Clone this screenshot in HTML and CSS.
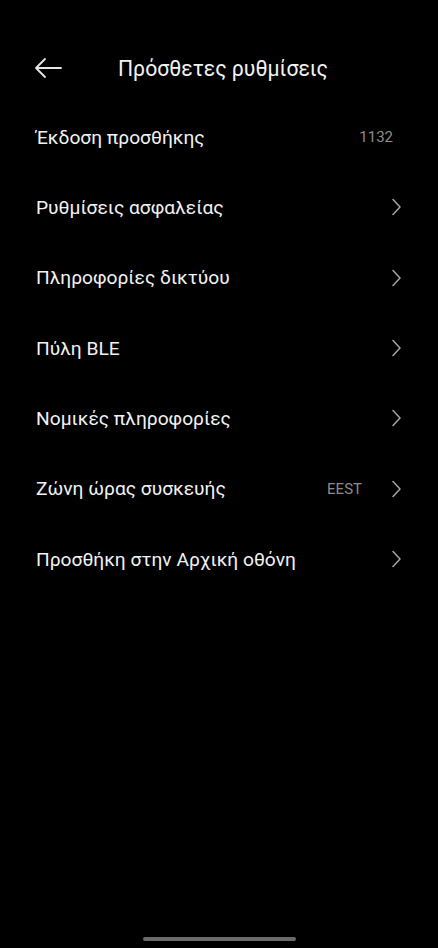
FILE: index.html
```html
<!DOCTYPE html>
<html lang="el">
<head>
  <meta charset="UTF-8">
  <meta name="viewport" content="width=device-width, initial-scale=1.0">
  <title>Πρόσθετες ρυθμίσεις</title>
  <link rel="stylesheet" href="styles.css">
</head>
<body>
  <header class="top-bar">
    <button class="back" aria-label="Πίσω">
      <svg width="28" height="22" viewBox="0 0 28 22" fill="none" stroke="#e6e6e6" stroke-width="1.8" stroke-linecap="round" stroke-linejoin="round">
        <path d="M27 11H2M11 2L2 11l9 9"/>
      </svg>
    </button>
    <h1>Πρόσθετες ρυθμίσεις</h1>
  </header>

  <ul class="settings">
    <li class="row">
      <span class="label">Έκδοση προσθήκης</span>
      <span class="value only">1132</span>
    </li>
    <li class="row">
      <span class="label">Ρυθμίσεις ασφαλείας</span>
      <svg class="chevron" width="10" height="18" viewBox="0 0 10 18"><path d="M2 1.5l7 7.5-7 7.5"/></svg>
    </li>
    <li class="row">
      <span class="label">Πληροφορίες δικτύου</span>
      <svg class="chevron" width="10" height="18" viewBox="0 0 10 18"><path d="M2 1.5l7 7.5-7 7.5"/></svg>
    </li>
    <li class="row">
      <span class="label">Πύλη BLE</span>
      <svg class="chevron" width="10" height="18" viewBox="0 0 10 18"><path d="M2 1.5l7 7.5-7 7.5"/></svg>
    </li>
    <li class="row">
      <span class="label">Νομικές πληροφορίες</span>
      <svg class="chevron" width="10" height="18" viewBox="0 0 10 18"><path d="M2 1.5l7 7.5-7 7.5"/></svg>
    </li>
    <li class="row">
      <span class="label">Ζώνη ώρας συσκευής</span>
      <span class="value">EEST</span>
      <svg class="chevron" width="10" height="18" viewBox="0 0 10 18"><path d="M2 1.5l7 7.5-7 7.5"/></svg>
    </li>
    <li class="row">
      <span class="label">Προσθήκη στην Αρχική οθόνη</span>
      <svg class="chevron" width="10" height="18" viewBox="0 0 10 18"><path d="M2 1.5l7 7.5-7 7.5"/></svg>
    </li>
  </ul>

  <div class="home-indicator"></div>
</body>
</html>
```

FILE: styles.css
```css
html, body {
  margin: 0;
  height: 100%;
  background: #000;
}
body {
  font-family: Roboto, "Noto Sans", sans-serif;
  color: #f2f2f2;
  display: flex;
  flex-direction: column;
}
.top-bar {
  display: flex;
  align-items: center;
  height: 56px;
  margin-top: 40px;
  padding: 0 34px;
  gap: 56px;
}
.back {
  background: none;
  border: 0;
  padding: 0;
  display: flex;
}
.top-bar h1 {
  margin: 0;
  font-size: 21.2px;
  font-weight: 400;
  color: #f2f2f2;
}
.settings {
  list-style: none;
  margin: 6px 0 0;
  padding: 0;
}
.row {
  display: flex;
  align-items: center;
  height: 70.33px;
  padding: 0 37px 0 36px;
}
.label {
  flex: 1;
  font-size: 19.2px;
}
.value {
  font-size: 15px;
  color: #8c8c8c;
  margin-right: 29px;
}
.value.only {
  margin-right: 8px;
}
.chevron {
  fill: none;
  stroke: #a6a6a6;
  stroke-width: 1.5;
  stroke-linecap: round;
  stroke-linejoin: round;
}
.home-indicator {
  margin: auto auto 7px;
  width: 153px;
  height: 4px;
  border-radius: 2px;
  background: #6b6b6b;
}
```
